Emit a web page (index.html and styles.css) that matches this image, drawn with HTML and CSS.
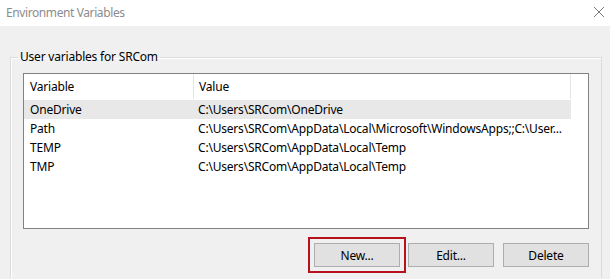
FILE: index.html
```html
<!DOCTYPE html>
<html lang="en">
<head>
    <meta charset="UTF-8">
    <title>Environment Variables</title>
    <link rel="stylesheet" href="styles.css">
</head>
<body>

<div class="titlebar">
    <span class="title">Environment Variables</span>
    <svg class="close" width="12" height="12" viewBox="0 0 12 12">
        <path d="M1 1 L11 11 M11 1 L1 11" stroke="#7a7a7a" stroke-width="1" fill="none"/>
    </svg>
</div>

<div class="content">
    <fieldset class="group">
        <legend>User variables for SRCom</legend>

        <div class="listview">
            <div class="row header">
                <div class="col name">Variable</div>
                <div class="col value">Value</div>
            </div>
            <div class="row selected">
                <div class="col name">OneDrive</div>
                <div class="col value">C:\Users\SRCom\OneDrive</div>
            </div>
            <div class="row">
                <div class="col name">Path</div>
                <div class="col value">C:\Users\SRCom\AppData\Local\Microsoft\WindowsApps;;C:\User...</div>
            </div>
            <div class="row">
                <div class="col name">TEMP</div>
                <div class="col value">C:\Users\SRCom\AppData\Local\Temp</div>
            </div>
            <div class="row">
                <div class="col name">TMP</div>
                <div class="col value">C:\Users\SRCom\AppData\Local\Temp</div>
            </div>
        </div>

        <div class="buttons">
            <span class="highlight"><button class="win-button">New...</button></span>
            <button class="win-button">Edit...</button>
            <button class="win-button">Delete</button>
        </div>
    </fieldset>
</div>

</body>
</html>
```

FILE: styles.css
```css
body {
    margin: 0;
    padding: 0;
    width: 610px;
    height: 279px;
    overflow: hidden;
    background-color: #f0f0f0;
    font-family: 'Noto Sans', 'Open Sans', sans-serif;
    font-size: 12px;
    letter-spacing: -0.2px;
    color: #000;
}

.titlebar {
    height: 25px;
    background-color: #fff;
    display: flex;
    align-items: center;
    justify-content: space-between;
    padding: 0 5px 1px 6px;
}

.title {
    color: #8c8c8c;
    letter-spacing: -0.4px;
}

.close {
    margin-top: -1px;
}

.content {
    padding: 24px 8px 0 10px;
}

.group {
    box-sizing: border-box;
    margin: 0;
    padding: 9px 12px 0 12px;
    border: 1px solid #dcdcdc;
    border-bottom: none;
    height: 228px;
    box-shadow: inset 1px 1px 0 #fff;
}

.group legend {
    padding: 0 2px;
    margin-left: -5px;
    line-height: 14px;
}

.listview {
    width: 564px;
    height: 154px;
    border: 1px solid #828282;
    background-color: #fff;
}

.row {
    display: flex;
    height: 19px;
    line-height: 19px;
    width: 547px;
}

.row.header {
    height: 25px;
    line-height: 25px;
    margin-bottom: 1px;
}

.row.header .col {
    border-right: 1px solid #e5e5e5;
}

.row.selected {
    background-color: #e8e8e8;
}

.col {
    white-space: nowrap;
    overflow: hidden;
}

.col.name {
    width: 163px;
    padding-left: 6px;
}

.col.value {
    flex: 1;
    padding-left: 5px;
}

.buttons {
    display: flex;
    justify-content: flex-end;
    gap: 9px;
    margin-top: 14px;
    width: 566px;
}

.highlight {
    border: 2px solid #b5121b;
    padding: 4px;
    margin: -6px -6px 0 0;
    display: flex;
}

.highlight + .win-button {
    margin-left: -1px;
}

.win-button {
    width: 86px;
    height: 24px;
    background-color: #e1e1e1;
    border: 1px solid #adadad;
    font-family: inherit;
    font-size: 12px;
    letter-spacing: -0.2px;
    color: #000;
    padding: 0;
}
```
